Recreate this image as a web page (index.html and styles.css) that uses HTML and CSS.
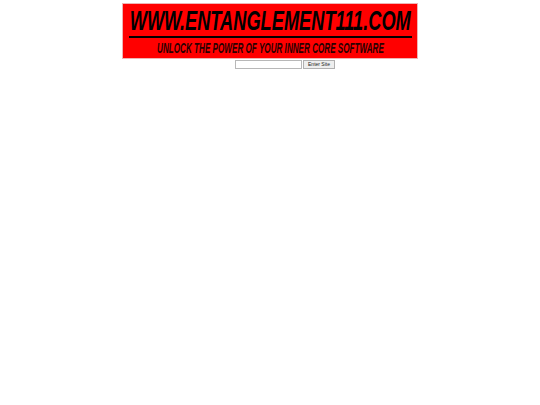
FILE: index.html
```html
<!DOCTYPE html>
<html>
<head>
<meta charset="utf-8">
<link rel="stylesheet" href="styles.css">
</head>
<body>
<div class="page">
  <div class="banner">
    <div class="row title-row"><span class="title">WWW.ENTANGLEMENT111.COM</span></div>
    <div class="rule"></div>
    <div class="row sub-row"><span class="sub">UNLOCK THE POWER OF YOUR INNER CORE SOFTWARE</span></div>
  </div>
  <form class="enter">
    <input class="field" type="text">
    <button class="btn" type="button">Enter Site</button>
  </form>
</div>
</body>
</html>
```

FILE: styles.css
```css
html, body {
  margin: 0;
  padding: 0;
  background: #ffffff;
}
.page {
  padding-top: 3px;
  display: flex;
  flex-direction: column;
  align-items: center;
  font-family: "Liberation Sans", Arial, sans-serif;
}
.banner {
  width: 294px;
  height: 54px;
  border: 1px solid #eeb4b4;
  background: #ff0000;
  display: flex;
  flex-direction: column;
  align-items: center;
  overflow: hidden;
}
.row {
  width: 100%;
  display: flex;
  justify-content: center;
  white-space: nowrap;
}
.title-row {
  margin-top: 4px;
  height: 27px;
}
.title {
  display: inline-block;
  font-size: 27px;
  line-height: 27px;
  font-weight: bold;
  font-style: italic;
  color: #000;
  transform: scaleX(0.675);
  transform-origin: center;
}
.rule {
  margin-top: 1px;
  width: 283px;
  height: 2px;
  background: #000;
}
.sub-row {
  margin-top: 3px;
  height: 14px;
}
.sub {
  display: inline-block;
  font-size: 14px;
  line-height: 14px;
  font-weight: bold;
  font-style: italic;
  color: #2a0000;
  transform: scaleX(0.58);
  transform-origin: center;
}
.enter {
  margin: 1px 0 0 30px;
  display: flex;
  gap: 1px;
  align-items: center;
}
.field {
  box-sizing: border-box;
  width: 67px;
  height: 9px;
  margin: 0;
  padding: 0;
  border: 1px solid #b8b8b8;
  background: #fff;
}
.btn {
  box-sizing: border-box;
  width: 32px;
  height: 9px;
  margin: 0;
  padding: 0;
  border: 1px solid #b0b0b0;
  background: #eeeeee;
  font-family: "Liberation Sans", Arial, sans-serif;
  font-size: 5px;
  line-height: 7px;
  color: #222;
}
```
